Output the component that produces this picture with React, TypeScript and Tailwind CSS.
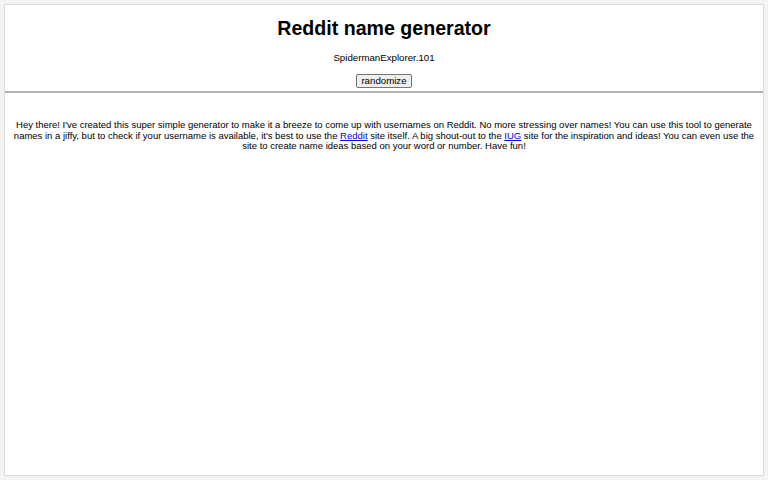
import React from "react";

export default function App() {
  return (
    <div className="min-h-[480px] bg-[#f3f3f3] p-[4px]" style={{ fontFamily: '"Liberation Sans", Arial, sans-serif' }}>
      <div className="h-[472px] border border-[#dcdcdc] bg-white">
        <div className="flex flex-col items-center pt-[11px]">
          <h1 className="text-[19.6px] font-bold leading-[24px] text-black">Reddit name generator</h1>
          <div className="mt-[12px] text-[9.7px] leading-[12px] text-black">SpidermanExplorer.101</div>
          <button className="mt-[10px] flex h-[14px] items-center rounded-[2px] border border-[#767676] bg-[#efefef] px-[4px] text-[9.7px] leading-[12px] text-black">
            randomize
          </button>
        </div>
        <hr className="mt-[3px] border-t-2 border-[#b4b4b4]" />
        <p className="mx-[8px] mt-[27px] text-center text-[9.5px] leading-[10.6px] text-black">
          Hey there! I've created this super simple generator to make it a breeze to come up with usernames on Reddit. No more stressing over names! You can use this tool to generate names in a jiffy, but to check if your username is available, it's best to use the{" "}
          <a href="#" className="text-[#0000ee] underline">Reddit</a> site itself. A big shout-out to the{" "}
          <a href="#" className="text-[#0000ee] underline">IUG</a> site for the inspiration and ideas! You can even use the site to create name ideas based on your word or number. Have fun!
        </p>
      </div>
    </div>
  );
}
